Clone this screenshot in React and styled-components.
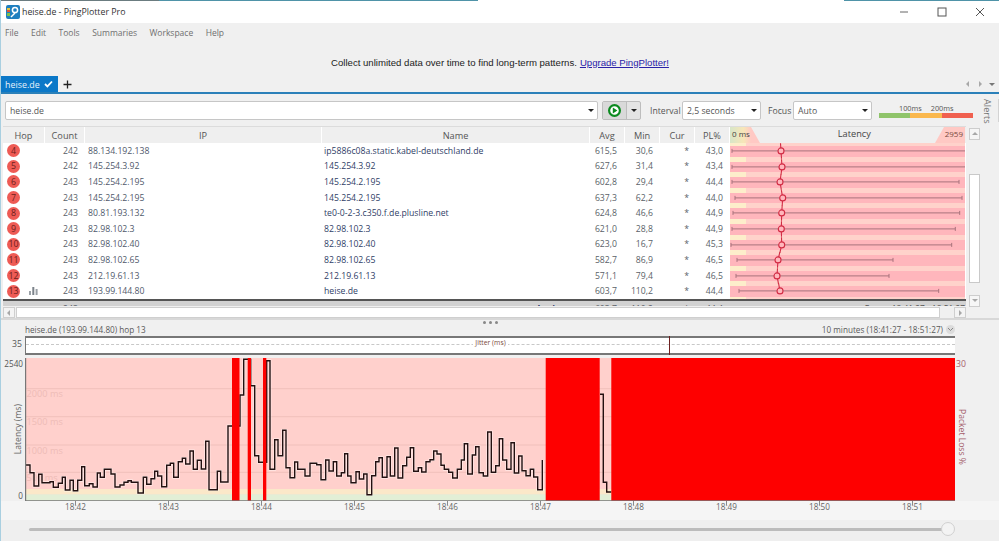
import React from 'react';
import styled, { createGlobalStyle } from 'styled-components';

const Global = createGlobalStyle`
  html, body { margin: 0; padding: 0; background: #f0f0f0; }
  * { box-sizing: border-box; }
`;

const Page = styled.div`
  width: 999px; height: 541px; overflow: hidden; display: flex; flex-direction: column;
  background: #f0f0f0; color: #4a4a4a; font-family: "Open Sans", "Noto Sans", sans-serif; font-size: 8.8px;
  border-left: 1px solid #a9cfe0;
`;
const TopStrip = styled.div`
  height: 1px; flex: none;
  background: linear-gradient(90deg, #6b7c80 0, #6b7c80 158px, #4f93a8 158px, #4f93a8 477px, #fff 477px, #fff 843px, #4f93a8 843px);
`;
const TitleBar = styled.div`
  height: 22px; flex: none; background: #fff; display: flex; align-items: center; padding: 0 1px 0 5px; gap: 2px;
  font-size: 8.8px; color: #333;
`;
const TitleText = styled.span` flex: 1; `;
const WinBtn = styled.div`
  width: 36px; height: 22px; display: flex; align-items: center; justify-content: center; color: #555;
`;
const MenuBar = styled.div`
  height: 19px; flex: none; display: flex; gap: 12.5px; align-items: center; padding-left: 4px; color: #6f6f6f; font-size: 8.5px;
`;
const Banner = styled.div`
  height: 34px; flex: none; display: flex; align-items: center; justify-content: center; padding-top: 6px;
  font-family: "Liberation Sans", Arial, sans-serif; font-size: 9.6px; color: #222; gap: 3px;
  a { color: #2a22a8; text-decoration: underline; }
`;
const TabRow = styled.div`
  height: 18px; flex: none; display: flex; align-items: flex-end; border-bottom: 2px solid #2b80b9; margin-left: -1px;
`;
const Tab = styled.div`
  width: 58px; height: 16px; background: #0b78c8; color: #e8f3fb; display: flex; align-items: center; gap: 4px; padding-left: 5px; font-size: 8.9px;
`;
const AddTab = styled.div`
  width: 18px; height: 16px; display: flex; align-items: center; justify-content: center; color: #222;
`;
const TabNav = styled.div`
  margin-left: auto; height: 16px; display: flex; align-items: center; gap: 4px; padding-right: 3px; color: #b4b4b4; font-size: 7px;
`;
const Body = styled.div`
  display: grid; grid-template-columns: 979px 19px; flex: none;
`;
const Main = styled.div` min-width: 0; `;
const AlertsGutter = styled.div`
  display: flex; padding-top: 5px; gap: 1px;
`;
const AlertsText = styled.div`
  writing-mode: vertical-rl; height: 24px; margin-left: 1px; font-size: 9.2px; color: #777;
`;
const AlertsThumb = styled.div` width: 4px; height: 23px; margin-left: 3px; background: #d3d3d3; `;

const Toolbar = styled.div`
  height: 32px; display: flex; align-items: center; padding: 1px 0 0 4px; font-size: 8.7px; color: #555;
`;
const Field = styled.div`
  width: ${p => p.$w}px; height: 19px; flex: none; background: #fff; border: 1px solid #c6c6c6; border-radius: 2px;
  display: flex; align-items: center; justify-content: space-between; padding: 0 3px 0 4px; color: #555; font-size: 8.7px;
`;
const Caret = styled.span`
  width: 0; height: 0; border-left: 3px solid transparent; border-right: 3px solid transparent; border-top: 3.5px solid #222;
`;
const PlayGroup = styled.div`
  margin-left: 4px; display: flex; height: 19px; width: 39px; flex: none; border: 1px solid #bdbdbd; border-radius: 2px; background: #e4e4e4;
`;
const PlayPart = styled.div`
  width: 24px; display: flex; align-items: center; justify-content: center; border-right: 1px solid #bdbdbd; background: #d9d9d9;
`;
const MorePart = styled.div` flex: 1; display: flex; align-items: center; justify-content: center; `;
const ToolLabel = styled.span` margin-left: ${p => p.$ml}px; width: ${p => p.$w}px; flex: none; white-space: nowrap; `;
const Legend = styled.div` margin-left: 7px; width: 94px; flex: none; display: flex; flex-direction: column; `;
const LegendLabels = styled.div` display: flex; padding-left: 20px; gap: 9px; font-size: 7.3px; color: #555; line-height: 10px; `;
const LegendBar = styled.div` display: grid; grid-template-columns: 1fr 1fr 1fr; height: 5px; `;
const LegendSeg = styled.div` background: ${p => p.$c}; `;

const TableWrap = styled.div`
  display: grid; grid-template-columns: 963px 14px; padding-left: 2px; height: 181px;
`;
const Table = styled.div` min-width: 0; display: flex; flex-direction: column; `;
const COLS = '42px 40px 237px 268px 35px 35px 35px 35px 235px';
const HeaderRow = styled.div`
  display: grid; grid-template-columns: ${COLS}; height: 17px; background: #efefef; border-top: 1px solid #dcdcdc; font-size: 9.2px; color: #555;
`;
const HeadCell = styled.div`
  display: flex; align-items: center; justify-content: center; border-right: 1px solid #fff;
`;
const LatencyHead = styled.div`
  position: relative; display: flex; align-items: center; justify-content: space-between; padding: 0 2px 3px 2px; overflow: hidden;
  &::before { content: ''; position: absolute; left: 0; top: 0; bottom: 0; width: 30px; clip-path: polygon(0 0, 70% 0, 100% 100%, 0 100%);
    background: linear-gradient(90deg, #d7e6c8 0, #f7e6b8 45%, #ffc9c4 70%); }
  &::after { content: ''; position: absolute; right: 0; top: 0; bottom: 0; width: 30px; clip-path: polygon(30% 0, 100% 0, 100% 100%, 0 100%); background: #ffc9c4; }
`;
const HeadText = styled.span`
  position: relative; z-index: 1; color: ${p => p.$c || '#555'}; font-size: ${p => p.$fs || 8}px; margin-left: ${p => p.$ml || 0}px;
`;
const Row = styled.div`
  display: grid; grid-template-columns: ${COLS}; height: 15.6px; background: #fff; font-size: 8.7px; color: #555; align-items: center;
`;
const HopCell = styled.div` display: flex; align-items: center; padding-left: 4px; height: 100%; `;
const Badge = styled.span`
  min-width: 13px; height: 13px; padding: 0 1px; border-radius: 7px; background: #ee5b55; color: #6d1f1c; display: flex; align-items: center; justify-content: center; font-size: 8.8px;
`;
const Num = styled.div` text-align: right; padding-right: ${p => p.$pr}px; color: #5a5f68; white-space: nowrap; `;
const Ip = styled.div` padding-left: 3px; color: #50596b; `;
const Name = styled.div` padding-left: 2px; color: #2f4066; white-space: nowrap; `;
const BarsIcon = styled.svg` margin-left: 9px; flex: none; `;
const LatencyCell = styled.div`
  height: 100%; position: relative;
  background: linear-gradient(180deg, #ffd2cb 0, #ffd2cb 17%, #ffb6bc 17%, #ffb6bc 88%, #ffd2cb 88%);
`;
const LatencyTint = styled.div`
  position: absolute; left: 0; top: 0; bottom: 0; width: 16px;
  background: linear-gradient(180deg, #fdeecb 0, #fdeecb 17%, transparent 17%, transparent 88%, #fdeecb 88%);
`;
const LatencySvg = styled.svg` position: absolute; inset: 0; overflow: visible; z-index: 1; `;
const FooterClip = styled.div`
  height: 7px; overflow: hidden; border-top: 2px solid #555; background: #d2d2d2;
`;
const FooterRow = styled(Row)` background: #d2d2d2; `;
const RoundTrip = styled.div` text-align: right; padding-right: 7px; font-weight: 700; color: #1f2f66; font-size: 9.2px; `;
const FocusText = styled.div` text-align: right; white-space: nowrap; color: #555; font-size: 8.4px; overflow: hidden; `;
const VScroll = styled.div`
  padding: 2px 0 0 3px; display: flex; flex-direction: column; height: 181px;
`;
const ScrollBtn = styled.div`
  width: 11px; height: 12px; background: #f6f6f6; border: 1px solid #cdcdcd; display: flex; align-items: center; justify-content: center; flex: none;
`;
const VTrack = styled.div`
  flex: 1; padding: 34px 0 12px 0; width: 11px; display: flex;
`;
const VThumb = styled.div` flex: 1; background: #fff; border: 1px solid #c9c9c9; `;
const HScroll = styled.div`
  height: 11px; display: flex; margin-left: 2px; width: 963px; align-items: stretch;
`;
const HBtn = styled.div`
  width: 12px; flex: none; background: #f4f4f4; border: 1px solid #cfcfcf; display: flex; align-items: center; justify-content: center;
`;
const HTrack = styled.div` width: 924px; flex: none; margin-left: 1px; background: #fff; border: 1px solid #cfcfcf; `;
const HGap = styled.div` flex: 1; `;

const Panel = styled.div`
  flex: 1; display: flex; flex-direction: column; border-top: 2px solid #d8d8d8; margin-left: -1px;
  background: linear-gradient(180deg, #f0f0f0 0, #f0f0f0 181px, #f5f5f5 181px, #f5f5f5 200px, #efefef 200px);
`;
const Dots = styled.div`
  height: 5px; display: flex; justify-content: center; align-items: center; gap: 3px; padding-right: 19px;
`;
const Dot = styled.span` width: 3px; height: 3px; border-radius: 50%; background: #888; `;
const PanelHead = styled.div`
  height: 11px; display: flex; justify-content: space-between; align-items: center; padding: 0 56px 0 25px; color: #5a5a5a; font-size: 8.2px; margin-top: -1px; position: relative;
`;
const Chevron = styled.span`
  position: absolute; right: 44px; top: 1px; width: 9px; height: 9px; border-radius: 50%; background: #dcdcdc; display: flex; align-items: center; justify-content: center;
`;
const JitterRow = styled.div`
  display: grid; grid-template-columns: 25px 930px; height: 19px; margin-top: 1px;
`;
const JitterAxis = styled.div` text-align: right; padding-right: 3px; line-height: 17px; font-size: 8.7px; color: #555; `;
const JitterBox = styled.div`
  position: relative; background: #fff; border: solid #777; border-width: 2px 0 2px 1px; display: flex; justify-content: center; align-items: flex-start;
  font-size: 6.8px; color: #7b4a3a;
  &::before { content: ''; position: absolute; left: 0; right: 0; top: 6px; border-top: 1px dashed #c8c8c8; }
  &::after { content: ''; position: absolute; left: 643px; top: -2px; bottom: -2px; width: 1px; background: #6d2020; }
`;
const JitterLabel = styled.span` position: relative; background: #fff; line-height: 9px; padding: 0 2px; `;
const ChartRow = styled.div`
  display: grid; grid-template-columns: 25px 930px 44px; height: 143px; margin-top: 3px;
`;
const LeftAxis = styled.div`
  position: relative; display: flex; flex-direction: column; justify-content: space-between; align-items: flex-end; padding: 0 2px 0 0; font-size: 8.2px; color: #555;
`;
const VLabel = styled.span`
  position: absolute; writing-mode: vertical-rl; transform: rotate(180deg); left: 12px; top: 46px; font-size: 8.6px; color: #666;
`;
const RightAxis = styled.div`
  position: relative; padding: 0 0 0 1px; font-size: 8.7px; color: #a8606c; line-height: 13px;
`;
const PLLabel = styled.span`
  position: absolute; writing-mode: vertical-rl; left: 0; top: 51px; color: #a5606c; font-size: 8.6px; white-space: nowrap;
`;
const TimeRow = styled.div` display: flex; padding-left: 29px; height: 12px; `;
const TimeLabel = styled.div`
  position: relative; width: 93px; flex: none; text-align: center; font-size: 8.2px; color: #666; line-height: 12px;
  &::before { content: ''; position: absolute; left: 46px; top: 0; width: 1px; height: 4px; background: #8a8a8a; }
`;
const SliderWrap = styled.div`
  position: relative; margin: 15px 0 0 29px; width: 916px; height: 3px; background: #bcbcbc; border-radius: 2px;
`;
const SliderThumb = styled.div`
  position: absolute; right: -10px; top: -6px; width: 14px; height: 14px; border-radius: 50%; background: #f3f3f3; border: 1px solid #d0d0d0;
`;

const ROWS = [
  [4, 242, '88.134.192.138', 'ip5886c08a.static.kabel-deutschland.de', '615,5', '30,6', '43,0', 2, 51, 235],
  [5, 242, '145.254.3.92', '145.254.3.92', '627,6', '31,4', '43,4', 2, 52, 235],
  [6, 243, '145.254.2.195', '145.254.2.195', '602,8', '29,4', '44,4', 2, 50, 229],
  [7, 243, '145.254.2.195', '145.254.2.195', '637,3', '62,2', '44,0', 5, 52.7, 232],
  [8, 243, '80.81.193.132', 'te0-0-2-3.c350.f.de.plusline.net', '624,8', '46,6', '44,9', 3, 51.7, 229.7],
  [9, 243, '82.98.102.3', '82.98.102.3', '621,0', '28,8', '44,9', 2, 51.3, 225.3],
  [10, 243, '82.98.102.40', '82.98.102.40', '623,0', '16,7', '45,3', 1, 51.7, 221.7],
  [11, 243, '82.98.102.65', '82.98.102.65', '582,7', '86,9', '46,5', 7, 48, 163],
  [12, 243, '212.19.61.13', '212.19.61.13', '571,1', '79,4', '46,5', 6, 47, 159],
  [13, 243, '193.99.144.80', 'heise.de', '603,7', '110,2', '44,4', 9, 50, 208.7],
];

const Z1 = [[78,345],[90,368],[102,408],[116,373],[126,398],[150,395],[160,412],[175,400],[187,382],[196,420],[210,391],[220,422],[233,391],[245,350],[254,407],[268,401],[279,411],[292,369],[301,382],[313,358],[333,372],[345,411],[360,405],[372,397],[384,392],[394,397],[414,429],[430,382],[440,403],[453,386],[464,364],[473,378],[485,410],[500,346],[511,340],[521,382],[535,335],[547,325],[557,342],[570,303],[580,358],[592,331],[604,357],[617,274],[627,419],[652,364],[662,396],[684,228],[695,228],[720,135],[731,28],[745,28],[752,107],[764,317],[776,337],[790,337],[800,32],[810,358],[824,269],[834,317],[848,241],[858,353],[870,383],[884,336],[893,358]];
const Z2 = [[15,378],[30,340],[50,344],[63,389],[77,330],[87,363],[100,335],[110,378],[124,368],[134,311],[143,378],[153,398],[168,365],[178,387],[191,372],[201,434],[215,377],[227,335],[237,323],[247,382],[261,320],[271,378],[284,294],[294,384],[308,347],[320,322],[331,293],[341,364],[355,353],[365,366],[378,335],[390,329],[401,303],[411,312],[423,346],[433,358],[446,367],[458,384],[472,358],[484,330],[493,281],[503,372],[517,315],[527,290],[537,368],[550,378],[563,246],[574,367],[587,347],[598,266],[608,330],[620,358],[633,278],[643,369],[656,318],[666,362],[678,377],[691,358],[701,381],[713,419],[727,330]];
const toChart = (off) => ([x, y]) => [off + x / 3 - 25, y / 3 + 350 - 358];
const TRACE = [...Z1.map(toChart(0)), ...Z2.map(toChart(300))];
const stepPath = (pts) => pts.reduce((d, [x, y], i) => i === 0 ? `M${x.toFixed(1)} ${y.toFixed(1)}` : `${d}H${x.toFixed(1)}V${y.toFixed(1)}`, '');
const TRACE2 = [[900,133],[910,397],[920,426],[934,426]].map(toChart(300));
const BARS = [[207, 7.5], [222.7, 3.3], [238, 3.3], [520.7, 54], [586.3, 344]];
const GRID = [[30.7, '2000 ms'], [58.7, '1500 ms'], [87, '1000 ms'], [114.3, '500 ms']];
const TIMES = ['18:42','18:43','18:44','18:45','18:46','18:47','18:48','18:49','18:50','18:51'];

function Chart() {
  return (
    <svg width="930" height="143" viewBox="0 0 930 143">
      <rect width="930" height="143" fill="#ffd0cc" />
      <rect y="131" width="930" height="5.5" fill="#fbe8c9" />
      <rect y="136.3" width="930" height="6.7" fill="#e2efd6" />
      {GRID.map(([y, t]) => (
        <g key={t}>
          <line x1="0" x2="930" y1={y} y2={y} stroke="#f0c0bb" strokeWidth="1" />
          <text x="1.5" y={y + 8.5} fontSize="9.2" fill="#eebcb7" fontFamily="Open Sans, sans-serif">{t}</text>
        </g>
      ))}
      <path d={stepPath(TRACE)} fill="none" stroke="#fff" strokeOpacity=".5" strokeWidth="2.8" />
      <path d={stepPath(TRACE)} fill="none" stroke="#231010" strokeWidth="1.4" />
      <path d={stepPath(TRACE2)} fill="none" stroke="#231010" strokeWidth="1.4" />
      {BARS.map(([x, w]) => <rect key={x} x={x} y="0" width={w} height="143" fill="#fe0000" />)}
      <path d="M0.5 0V143H930" fill="none" stroke="#777" strokeWidth="1.4" />
    </svg>
  );
}

function LatencyMarks({ i }) {
  const r = ROWS[i];
  const [min, avg, max] = [r[7], r[8], r[9]];
  const prev = i > 0 ? ROWS[i - 1][8] : avg - 1;
  const next = i < ROWS.length - 1 ? ROWS[i + 1][8] : avg;
  const cy = 7.7;
  return (
    <LatencySvg width="235" height="16" viewBox="0 0 235 15.6">
      <line x1={min} x2={Math.min(max, 235)} y1={cy} y2={cy} stroke="#a8737c" strokeWidth="1" />
      <line x1={min} x2={min} y1={cy - 2} y2={cy + 2} stroke="#a8737c" strokeWidth="1" />
      {max < 235 && <line x1={max} x2={max} y1={cy - 2} y2={cy + 2} stroke="#a8737c" strokeWidth="1" />}
      <path d={`M${(prev + avg) / 2} 0L${avg} ${cy}L${(avg + next) / 2} ${i === ROWS.length - 1 ? cy : 15.6}`} fill="none" stroke="#d22c44" strokeWidth="1.1" />
      <circle cx={avg} cy={cy} r="3" fill="#ffb6bc" stroke="#d22c44" strokeWidth="1.1" />
    </LatencySvg>
  );
}

const Triangle = ({ d }) => {
  const p = { up: '1,5 4,2 7,5', down: '1,2 4,5 7,2', left: '5,1 2,4 5,7', right: '3,1 6,4 3,7' }[d];
  return <svg width="8" height="8" viewBox="0 0 8 8"><polygon points={p} fill="#a8a8a8" /></svg>;
};

export default function App() {
  return (
    <Page>
      <Global />
      <TopStrip />
      <TitleBar>
        <svg width="14" height="14" viewBox="0 0 14 14">
          <rect width="14" height="14" rx="2" fill="#1f7fbf" />
          <circle cx="9" cy="5" r="2.6" fill="none" stroke="#fff" strokeWidth="1.5" />
          <path d="M9 8 L5 12" stroke="#fff" strokeWidth="1.5" />
          <rect x="1" y="3" width="3" height="2" fill="#e8c23a" />
          <rect x="1" y="5" width="3" height="2" fill="#e0533a" />
          <rect x="1" y="8" width="3" height="3" fill="#7fc04a" />
        </svg>
        <TitleText>heise.de - PingPlotter Pro</TitleText>
        <WinBtn>
          <svg width="10" height="10" viewBox="0 0 10 10"><path d="M1 5H9" stroke="#666" strokeWidth="1" /></svg>
        </WinBtn>
        <WinBtn>
          <svg width="10" height="10" viewBox="0 0 10 10"><rect x="1" y="1" width="8" height="8" fill="none" stroke="#555" strokeWidth="1" /></svg>
        </WinBtn>
        <WinBtn>
          <svg width="10" height="10" viewBox="0 0 10 10"><path d="M1 1L9 9M9 1L1 9" stroke="#555" strokeWidth="1" /></svg>
        </WinBtn>
      </TitleBar>
      <MenuBar>
        {['File', 'Edit', 'Tools', 'Summaries', 'Workspace', 'Help'].map(m => <span key={m}>{m}</span>)}
      </MenuBar>
      <Banner>
        <span>Collect unlimited data over time to find long-term patterns.</span>
        <a>Upgrade PingPlotter!</a>
      </Banner>
      <TabRow>
        <Tab>
          heise.de
          <svg width="9" height="8" viewBox="0 0 9 8"><path d="M1 4L3.4 6.4L8 1.5" fill="none" stroke="#fff" strokeWidth="1.8" /></svg>
        </Tab>
        <AddTab>
          <svg width="9" height="9" viewBox="0 0 9 9"><path d="M4.5 0.5V8.5M0.5 4.5H8.5" stroke="#222" strokeWidth="1.3" /></svg>
        </AddTab>
        <TabNav>
          <Triangle d="left" />
          <Triangle d="right" />
          <svg width="8" height="8" viewBox="0 0 8 8"><polygon points="1,3 7,3 4,6" fill="#777" /></svg>
        </TabNav>
      </TabRow>
      <Body>
        <Main>
          <Toolbar>
            <Field $w={593}>heise.de<Caret /></Field>
            <PlayGroup>
              <PlayPart>
                <svg width="13" height="13" viewBox="0 0 13 13">
                  <circle cx="6.5" cy="6.5" r="5.4" fill="#fff" stroke="#0a8a1e" strokeWidth="2.2" />
                  <polygon points="4.8,3.6 9.4,6.5 4.8,9.4" fill="#0a8a1e" />
                </svg>
              </PlayPart>
              <MorePart><Caret /></MorePart>
            </PlayGroup>
            <ToolLabel $ml={9} $w={32}>Interval</ToolLabel>
            <Field $w={79}>2,5 seconds<Caret /></Field>
            <ToolLabel $ml={7} $w={25}>Focus</ToolLabel>
            <Field $w={79}>Auto<Caret /></Field>
            <Legend>
              <LegendLabels><span>100ms</span><span>200ms</span></LegendLabels>
              <LegendBar>
                <LegendSeg $c="#8fc46a" />
                <LegendSeg $c="#fab84e" />
                <LegendSeg $c="#f0604f" />
              </LegendBar>
            </Legend>
          </Toolbar>
          <TableWrap>
            <Table>
              <HeaderRow>
                <HeadCell>Hop</HeadCell>
                <HeadCell>Count</HeadCell>
                <HeadCell>IP</HeadCell>
                <HeadCell>Name</HeadCell>
                <HeadCell>Avg</HeadCell>
                <HeadCell>Min</HeadCell>
                <HeadCell>Cur</HeadCell>
                <HeadCell>PL%</HeadCell>
                <LatencyHead>
                  <HeadText $c="#444">0 ms</HeadText>
                  <HeadText $fs={9.2} $c="#444" $ml={14}>Latency</HeadText>
                  <HeadText $c="#7a4a40">2959</HeadText>
                </LatencyHead>
              </HeaderRow>
              {ROWS.map((r, i) => (
                <Row key={r[0]}>
                  <HopCell>
                    <Badge>{r[0]}</Badge>
                    {r[0] === 13 && (
                      <BarsIcon width="9" height="8" viewBox="0 0 9 8">
                        <rect x="0" y="4" width="2" height="4" fill="#9aa0a6" />
                        <rect x="3.3" y="0" width="2" height="8" fill="#7c838a" />
                        <rect x="6.6" y="2" width="2" height="6" fill="#9aa0a6" />
                      </BarsIcon>
                    )}
                  </HopCell>
                  <Num $pr={7}>{r[1]}</Num>
                  <Ip>{r[2]}</Ip>
                  <Name>{r[3]}</Name>
                  <Num $pr={8}>{r[4]}</Num>
                  <Num $pr={7}>{r[5]}</Num>
                  <Num $pr={6}>*</Num>
                  <Num $pr={7}>{r[6]}</Num>
                  <LatencyCell>
                    <LatencyTint />
                    <LatencyMarks i={i} />
                  </LatencyCell>
                </Row>
              ))}
              <FooterClip>
                <FooterRow>
                  <HopCell />
                  <Num $pr={7}>243</Num>
                  <Ip />
                  <RoundTrip>Round Trip (ms)</RoundTrip>
                  <Num $pr={8}>603,7</Num>
                  <Num $pr={7}>110,2</Num>
                  <Num $pr={6}>*</Num>
                  <Num $pr={7}>44,4</Num>
                  <FocusText>Focus: 18:41:27 - 18:51:27</FocusText>
                </FooterRow>
              </FooterClip>
            </Table>
            <VScroll>
              <ScrollBtn><Triangle d="up" /></ScrollBtn>
              <VTrack><VThumb /></VTrack>
              <ScrollBtn><Triangle d="down" /></ScrollBtn>
            </VScroll>
          </TableWrap>
          <HScroll>
            <HBtn><Triangle d="left" /></HBtn>
            <HTrack />
            <HGap />
            <HBtn><Triangle d="right" /></HBtn>
          </HScroll>
        </Main>
        <AlertsGutter>
          <AlertsText>Alerts</AlertsText>
          <AlertsThumb />
        </AlertsGutter>
      </Body>
      <Panel>
        <Dots><Dot /><Dot /><Dot /></Dots>
        <PanelHead>
          <span>heise.de (193.99.144.80) hop 13</span>
          <span>10 minutes (18:41:27 - 18:51:27)</span>
          <Chevron>
            <svg width="7" height="5" viewBox="0 0 7 5"><path d="M1 1L3.5 3.5L6 1" fill="none" stroke="#888" strokeWidth="1" /></svg>
          </Chevron>
        </PanelHead>
        <JitterRow>
          <JitterAxis>35</JitterAxis>
          <JitterBox><JitterLabel>Jitter (ms)</JitterLabel></JitterBox>
        </JitterRow>
        <ChartRow>
          <LeftAxis>
            <span>2540</span>
            <VLabel>Latency (ms)</VLabel>
            <span>0</span>
          </LeftAxis>
          <Chart />
          <RightAxis>
            30
            <PLLabel>Packet Loss %</PLLabel>
          </RightAxis>
        </ChartRow>
        <TimeRow>
          {TIMES.map(t => <TimeLabel key={t}>{t}</TimeLabel>)}
        </TimeRow>
        <SliderWrap><SliderThumb /></SliderWrap>
      </Panel>
    </Page>
  );
}
